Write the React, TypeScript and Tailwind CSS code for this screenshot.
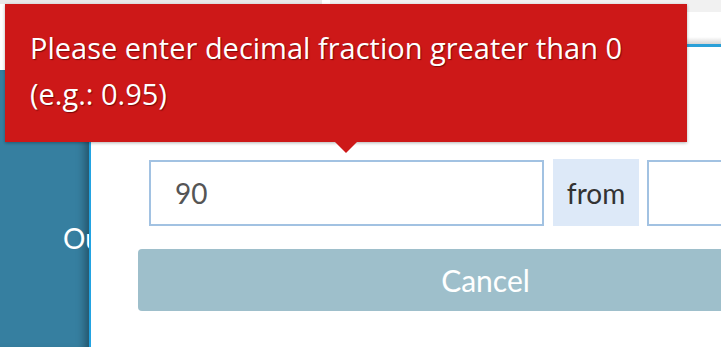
export default function App() {
  return (
    <div
      className="relative flex h-[347px] w-[721px] flex-col overflow-hidden bg-white"
      style={{ fontFamily: "Lato, 'Noto Sans', sans-serif" }}
    >
      {/* top strip */}
      <div className="flex h-[4px] shrink-0">
        <div className="w-[322px] bg-[#e9e9e9]" />
        <div className="w-[8px] bg-white" />
        <div className="flex-1 bg-[#f1f1f1]" />
      </div>

      <div className="flex flex-1">
        {/* sidebar */}
        <div className="flex w-[89px] shrink-0 flex-col">
          <div className="h-[66px] bg-white" />
          <div className="flex-1 overflow-hidden whitespace-nowrap bg-[#367fa0] pl-[63px] pt-[151px] text-[28px] leading-[34px] text-white shadow-[inset_-10px_0_8px_-6px_rgba(0,0,0,0.35)]">
            Outbox
          </div>
        </div>
        <div className="w-[2px] shrink-0 bg-[#22a3e2]" />

        {/* modal */}
        <div className="flex min-w-0 flex-1 flex-col">
          <div className="flex h-[43px] shrink-0 flex-col border-b-[3px] border-[#2aa0d8]">
            <div className="h-[8px] bg-[#f1f1f1]" />
            <div className="flex-1 bg-white" />
            <div className="h-[7px] bg-gradient-to-b from-white to-[#d6d6d6]" />
          </div>

          <div className="pl-[47px] pt-[112px]">
            <div className="ml-[11px] flex items-center">
              <div className="flex h-[66px] w-[395px] shrink-0 items-center border-2 border-[#a2c2e2] bg-white pl-[24px] text-[28px] text-[#555]">
                90
              </div>
              <div className="ml-[9px] flex h-[67px] w-[86px] shrink-0 items-center justify-center bg-[#dde9f8] text-[28px] text-[#333]">
                from
              </div>
              <div className="ml-[8px] h-[66px] w-[200px] shrink-0 border-2 border-[#a2c2e2] bg-white" />
            </div>
            <div className="mt-[23px] flex h-[62px] w-[695px] items-center justify-center rounded-[4px] bg-[#9ebfcb] text-[30px] text-white">
              Cancel
            </div>
          </div>
        </div>
      </div>

      {/* validation tooltip */}
      <div
        className="absolute left-[5px] top-[4px] h-[138px] w-[682px] bg-[#cd1818] px-[25px] pt-[21px] text-[29px] leading-[46px] text-white shadow-[0_1px_3px_rgba(0,0,0,0.3)] [text-shadow:1px_1px_1px_#7a0a0a]"
        style={{ fontFamily: "'Open Sans', sans-serif" }}
      >
        Please enter decimal fraction greater than 0
        <br />
        (e.g.: 0.95)
        <div className="absolute left-[330px] top-full h-0 w-0 border-l-[11px] border-r-[11px] border-t-[11px] border-l-transparent border-r-transparent border-t-[#cd1818]" />
      </div>
    </div>
  );
}
